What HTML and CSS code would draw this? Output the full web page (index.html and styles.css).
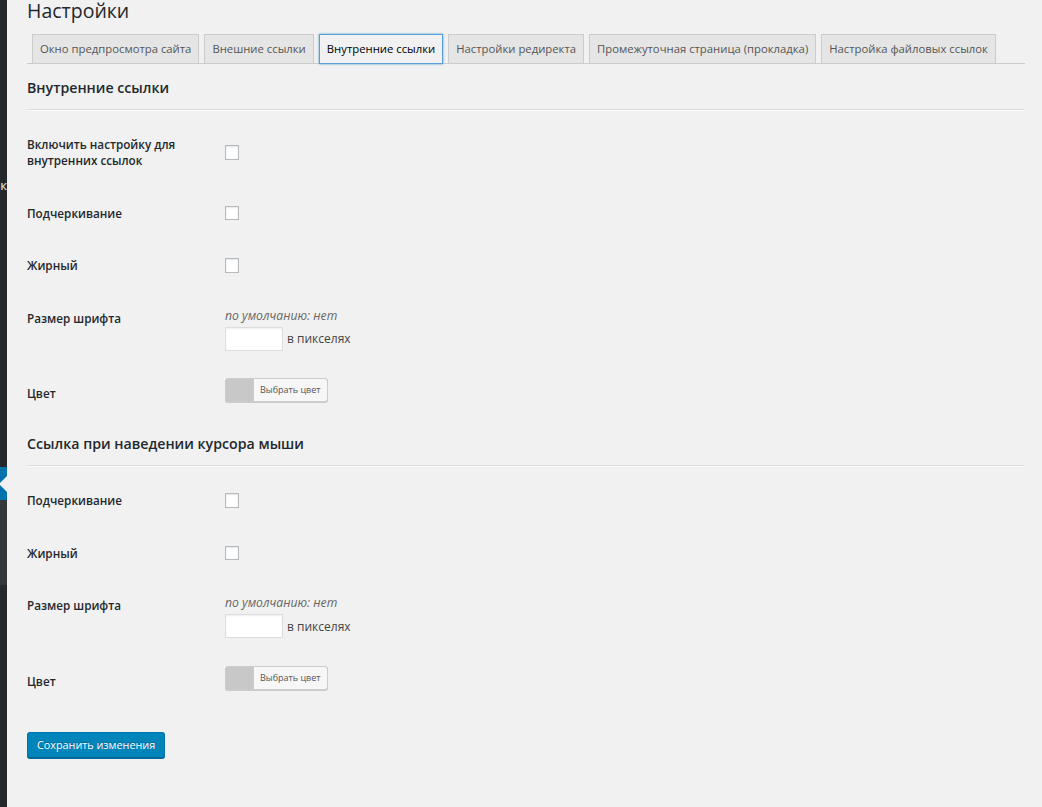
FILE: index.html
```html
<!DOCTYPE html>
<html lang="ru">
<head>
<meta charset="utf-8">
<title>Настройки</title>
<link rel="stylesheet" href="styles.css">
</head>
<body>
<div class="layout">
  <aside class="adminmenu">
    <div class="menu-top"><div class="menu-label">к</div></div>
    <div class="menu-current"><span class="menu-arrow"></span></div>
    <div class="submenu"></div>
    <div class="menu-rest"></div>
  </aside>
  <main class="wrap">
    <h1 class="page-title">Настройки</h1>
    <nav class="tabs">
      <a class="tab">Окно предпросмотра сайта</a>
      <a class="tab">Внешние ссылки</a>
      <a class="tab tab-active">Внутренние ссылки</a>
      <a class="tab">Настройки редиректа</a>
      <a class="tab">Промежуточная страница (прокладка)</a>
      <a class="tab">Настройка файловых ссылок</a>
    </nav>

    <h2 class="section-title">Внутренние ссылки</h2>
    <hr class="divider">
    <div class="form-table">
      <div class="row">
        <div class="th">Включить настройку для внутренних ссылок</div>
        <div class="td"><input type="checkbox" class="checkbox"></div>
      </div>
      <div class="row">
        <div class="th">Подчеркивание</div>
        <div class="td"><input type="checkbox" class="checkbox"></div>
      </div>
      <div class="row">
        <div class="th">Жирный</div>
        <div class="td"><input type="checkbox" class="checkbox"></div>
      </div>
      <div class="row">
        <div class="th">Размер шрифта</div>
        <div class="td td-stack">
          <p class="desc">по умолчанию: нет</p>
          <div class="field-line"><input type="text" class="text-input"><span class="unit">в пикселях</span></div>
        </div>
      </div>
      <div class="row">
        <div class="th">Цвет</div>
        <div class="td"><button type="button" class="color-btn"><span class="color-btn-text">Выбрать цвет</span></button></div>
      </div>
    </div>

    <h2 class="section-title section-title-second">Ссылка при наведении курсора мыши</h2>
    <hr class="divider">
    <div class="form-table">
      <div class="row">
        <div class="th">Подчеркивание</div>
        <div class="td"><input type="checkbox" class="checkbox"></div>
      </div>
      <div class="row">
        <div class="th">Жирный</div>
        <div class="td"><input type="checkbox" class="checkbox"></div>
      </div>
      <div class="row">
        <div class="th">Размер шрифта</div>
        <div class="td td-stack">
          <p class="desc">по умолчанию: нет</p>
          <div class="field-line"><input type="text" class="text-input"><span class="unit">в пикселях</span></div>
        </div>
      </div>
      <div class="row">
        <div class="th">Цвет</div>
        <div class="td"><button type="button" class="color-btn"><span class="color-btn-text">Выбрать цвет</span></button></div>
      </div>
    </div>

    <div class="submit">
      <button type="button" class="save-btn">Сохранить изменения</button>
    </div>
  </main>
</div>
</body>
</html>
```

FILE: styles.css
```css
* { box-sizing: border-box; }
html, body { margin: 0; padding: 0; }
body {
  background: #f1f1f1;
  font-family: "Open Sans", "Noto Sans", sans-serif;
  color: #23282d;
  overflow: hidden;
}
.layout { display: flex; min-height: 807px; }

.adminmenu {
  width: 7px;
  flex: none;
  display: flex;
  flex-direction: column;
  background: #23282d;
  overflow: hidden;
}
.menu-top { height: 467px; padding-top: 176px; }
.menu-label {
  font-size: 13px;
  line-height: 18px;
  color: #eeeeee;
  text-align: right;
  white-space: nowrap;
}
.menu-current { height: 33px; background: #0073aa; position: relative; }
.menu-arrow {
  position: absolute;
  right: 0;
  top: 50%;
  margin-top: -8px;
  width: 0;
  height: 0;
  border: 8px solid transparent;
  border-right-color: #f1f1f1;
}
.submenu { height: 85px; background: #32373c; }
.menu-rest { flex: 1; }

.wrap { flex: 1; min-width: 0; padding: 0 17px 0 20px; }

.page-title {
  margin: 0;
  font-size: 19.5px;
  font-weight: 400;
  line-height: 22px;
  color: #23282d;
}

.tabs {
  display: flex;
  gap: 5px;
  margin-top: 12px;
  padding-left: 5px;
  border-bottom: 1px solid #ccc;
}
.tab {
  display: block;
  border: 1px solid #ccc;
  background: #e5e5e5;
  color: #555;
  font-size: 11.3px;
  line-height: 20px;
  padding: 4px 7px;
  margin-bottom: -1px;
  white-space: nowrap;
  text-decoration: none;
}
.tab-active {
  background: #f1f1f1;
  color: #000;
  border-color: #5b9dd9;
  box-shadow: 0 0 2px rgba(30, 140, 190, 0.8);
}

.section-title {
  margin: 14px 0 0;
  font-size: 14.2px;
  font-weight: 600;
  line-height: 19px;
  color: #23282d;
}
.section-title-second { margin-top: 15px; }
.divider {
  margin: 12px 0 0;
  height: 0;
  border: 0;
  border-top: 1px solid #dddddd;
  border-bottom: 1px solid #fafafa;
}

.form-table { margin-top: 7px; }
.row { display: flex; }
.th {
  width: 189px;
  flex: none;
  padding: 18px 9px 18px 0;
  font-size: 11.7px;
  font-weight: 600;
  line-height: 16.4px;
  color: #23282d;
}
.td {
  display: flex;
  align-items: center;
  padding: 0 9px;
}
.td-stack {
  display: block;
  padding: 16px 9px 16.4px;
}

.checkbox {
  -webkit-appearance: none;
  appearance: none;
  margin: 0;
  width: 14.4px;
  height: 14.4px;
  border: 1px solid #b4b9be;
  background: #fff;
  box-shadow: inset 0 1px 2px rgba(0, 0, 0, 0.1);
}

.desc {
  margin: 0 0 3px;
  font-style: italic;
  color: #666;
  font-size: 12.2px;
  line-height: 16px;
}
.field-line { display: flex; align-items: center; gap: 4px; }
.text-input {
  width: 58px;
  height: 24px;
  margin: 0;
  border: 1px solid #ddd;
  background: #fff;
  box-shadow: inset 0 1px 2px rgba(0, 0, 0, 0.07);
}
.unit { font-size: 12px; color: #444; }

.color-btn {
  display: flex;
  height: 24px;
  margin: 0 0 6px;
  padding: 0 0 0 27px;
  border: 1px solid #ccc;
  border-radius: 3px;
  box-shadow: 0 1px 0 #ccc;
  background: #c8c8c8;
  overflow: hidden;
  font-family: inherit;
}
.color-btn-text {
  display: block;
  background: #f7f7f7;
  border-left: 1px solid #ccc;
  color: #555;
  font-size: 9px;
  line-height: 22px;
  padding: 0 6px;
  border-radius: 0 2px 2px 0;
}

.submit { margin-top: 25px; }
.save-btn {
  height: 26px;
  margin: 0;
  padding: 0 9px;
  border: 1px solid #0073aa;
  border-bottom-color: #006799;
  border-radius: 3px;
  background: #0085ba;
  box-shadow: 0 1px 0 #006799;
  color: #fff;
  font-family: inherit;
  font-size: 10.8px;
  line-height: 24px;
  text-shadow: 0 -1px 1px #006799;
}
```
